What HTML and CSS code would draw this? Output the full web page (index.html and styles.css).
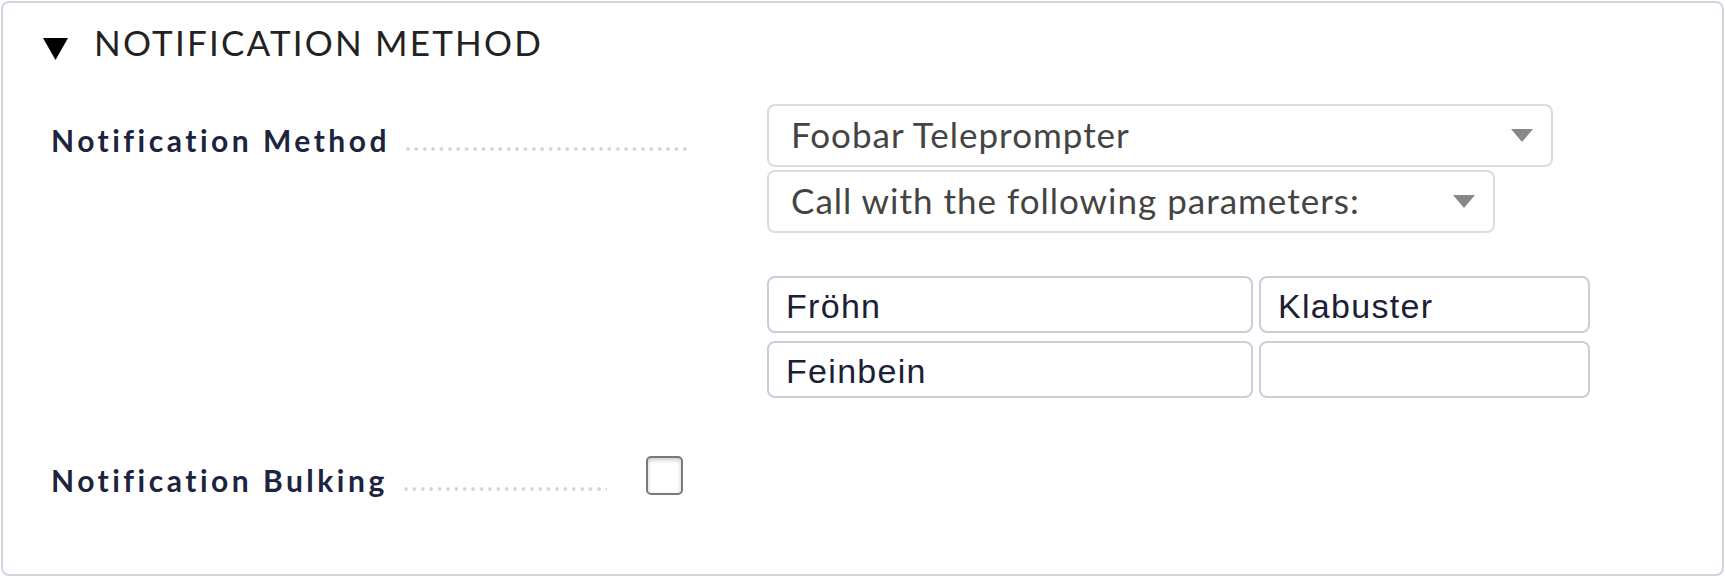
FILE: index.html
```html
<!DOCTYPE html>
<html lang="en">
<head>
<meta charset="utf-8">
<title>Notification Method</title>
<link rel="stylesheet" href="styles.css">
</head>
<body>
<div class="box">
  <div class="header">
    <svg class="tri" width="25" height="22" viewBox="0 0 25 22"><polygon points="0,0 25,0 12.5,22" fill="#000"/></svg>
    <span class="title">NOTIFICATION METHOD</span>
  </div>

  <div class="row row-method">
    <div class="legend legend-method">
      <span class="label">Notification Method</span>
      <span class="dots"></span>
    </div>
    <div class="content content-method">
      <div class="select sel1">
        <span class="sel-text">Foobar Teleprompter</span>
        <svg class="arrow" width="22" height="13" viewBox="0 0 22 13"><polygon points="0,0 22,0 11,13" fill="#888"/></svg>
      </div>
      <div class="select sel2">
        <span class="sel-text">Call with the following parameters:</span>
        <svg class="arrow" width="22" height="13" viewBox="0 0 22 13"><polygon points="0,0 22,0 11,13" fill="#888"/></svg>
      </div>
      <div class="params">
        <div class="input">Fröhn</div>
        <div class="input">Klabuster</div>
        <div class="input">Feinbein</div>
        <div class="input"></div>
      </div>
    </div>
  </div>

  <div class="row row-bulk">
    <div class="legend legend-bulk">
      <span class="label">Notification Bulking</span>
      <span class="dots"></span>
    </div>
    <div class="content content-bulk">
      <span class="checkbox"></span>
    </div>
  </div>
</div>
</body>
</html>
```

FILE: styles.css
```css
html, body {
  margin: 0;
  padding: 0;
  background: #ffffff;
}

.box {
  margin: 1px;
  height: 575px;
  box-sizing: border-box;
  border: 2px solid #d2d4e0;
  border-radius: 8px;
  background: #ffffff;
}

.header {
  display: flex;
  align-items: flex-start;
  padding: 18px 0 0 40px;
}

.tri {
  display: block;
  margin-top: 17px;
  flex: none;
}

.title {
  margin-left: 26px;
  font-family: "Lato", sans-serif;
  font-weight: 400;
  font-size: 35px;
  line-height: 42px;
  letter-spacing: 2.2px;
  color: #222222;
}

.row {
  display: flex;
  align-items: flex-start;
  padding-left: 48px;
}

.row-method {
  margin-top: 41px;
}

.row-bulk {
  margin-top: 57px;
}

.legend {
  display: flex;
  align-items: flex-start;
  flex: none;
}

.legend-method {
  width: 639px;
  padding-top: 18px;
}

.legend-bulk {
  width: 556px;
  padding-top: 7px;
}

.label {
  font-family: "Lato", sans-serif;
  font-weight: 700;
  font-size: 30px;
  line-height: 36px;
  letter-spacing: 3.5px;
  color: #1d2440;
  white-space: nowrap;
}

.dots {
  flex: 1;
  height: 4px;
  margin-top: 25px;
  margin-left: 16px;
  background-image: radial-gradient(circle at 2px 2px, #d4d4d4 1.5px, rgba(212, 212, 212, 0) 2px);
  background-size: 8.4px 4px;
  background-repeat: repeat-x;
}

.content-method {
  margin-left: 77px;
}

.content-bulk {
  margin-left: 39px;
}

.select {
  display: flex;
  align-items: center;
  justify-content: space-between;
  box-sizing: border-box;
  height: 63px;
  padding: 0 18px 0 22px;
  border: 2px solid #dcdcdc;
  border-radius: 8px;
  background: #ffffff;
}

.sel-text {
  padding-bottom: 4px;
  font-family: "Lato", sans-serif;
  font-weight: 400;
  font-size: 35px;
  line-height: 40px;
  letter-spacing: 1px;
  color: #444444;
  white-space: nowrap;
}

.sel1 {
  width: 786px;
}

.sel2 {
  width: 728px;
  margin-top: 3px;
}

.arrow {
  display: block;
  flex: none;
}

.params {
  display: grid;
  grid-template-columns: 486px 331px;
  grid-auto-rows: 57px;
  gap: 8px 6px;
  margin-top: 43px;
}

.input {
  display: flex;
  align-items: center;
  box-sizing: border-box;
  padding: 2px 15px 0 17px;
  border: 2px solid #cbcdda;
  border-radius: 8px;
  font-family: "Liberation Sans", Arial, sans-serif;
  font-size: 34px;
  line-height: 40px;
  letter-spacing: 1.3px;
  color: #1b2035;
  white-space: nowrap;
}

.checkbox {
  display: block;
  box-sizing: border-box;
  width: 37px;
  height: 39px;
  margin-top: 1px;
  border: 2px solid #7a7a7a;
  border-radius: 5px;
  background: #ffffff;
  box-shadow: inset 0 2px 4px rgba(0, 0, 0, 0.22);
}
```
